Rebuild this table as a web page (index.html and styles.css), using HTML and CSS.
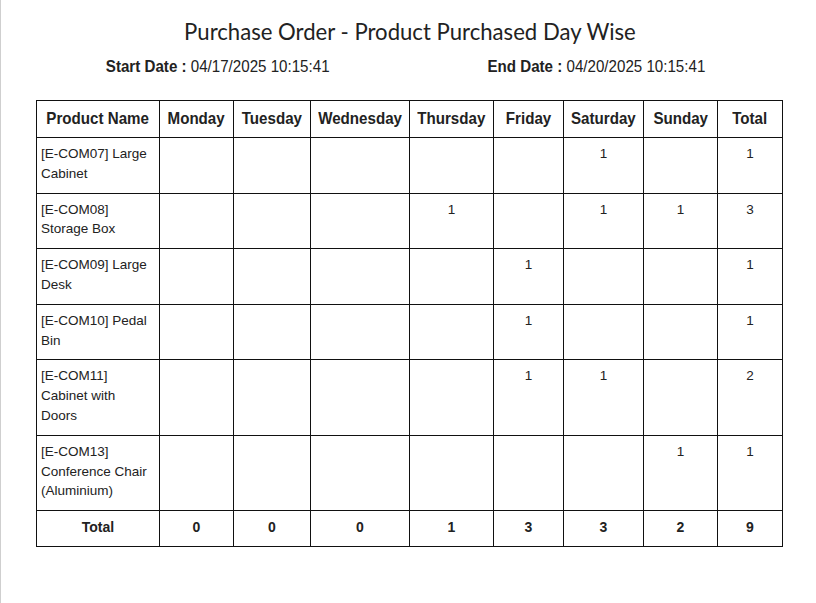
FILE: index.html
```html
<!DOCTYPE html>
<html>
<head>
<meta charset="utf-8">
<link rel="stylesheet" href="styles.css">
</head>
<body>
<div class="page">
  <h1 class="title"><span class="squeeze-title">Purchase Order - Product Purchased Day Wise</span></h1>
  <div class="dates">
    <div class="date date-start"><span class="squeeze"><b>Start Date :</b> 04/17/2025 10:15:41</span></div>
    <div class="date"><span class="squeeze"><b>End Date :</b> 04/20/2025 10:15:41</span></div>
  </div>
  <table class="report">
    <colgroup>
      <col class="c-name"><col class="c-mon"><col class="c-tue"><col class="c-wed"><col class="c-thu"><col class="c-fri"><col class="c-sat"><col class="c-sun"><col class="c-tot">
    </colgroup>
    <thead>
      <tr><th><span class="squeeze">Product Name</span></th><th><span class="squeeze">Monday</span></th><th><span class="squeeze">Tuesday</span></th><th><span class="squeeze">Wednesday</span></th><th><span class="squeeze">Thursday</span></th><th><span class="squeeze">Friday</span></th><th><span class="squeeze">Saturday</span></th><th><span class="squeeze">Sunday</span></th><th><span class="squeeze">Total</span></th></tr>
    </thead>
    <tbody>
      <tr><td class="name">[E-COM07] Large Cabinet</td><td></td><td></td><td></td><td></td><td></td><td>1</td><td></td><td>1</td></tr>
      <tr><td class="name">[E-COM08] Storage Box</td><td></td><td></td><td></td><td>1</td><td></td><td>1</td><td>1</td><td>3</td></tr>
      <tr><td class="name">[E-COM09] Large Desk</td><td></td><td></td><td></td><td></td><td>1</td><td></td><td></td><td>1</td></tr>
      <tr><td class="name">[E-COM10] Pedal Bin</td><td></td><td></td><td></td><td></td><td>1</td><td></td><td></td><td>1</td></tr>
      <tr><td class="name">[E-COM11] Cabinet with Doors</td><td></td><td></td><td></td><td></td><td>1</td><td>1</td><td></td><td>2</td></tr>
      <tr><td class="name">[E-COM13] Conference Chair (Aluminium)</td><td></td><td></td><td></td><td></td><td></td><td></td><td>1</td><td>1</td></tr>
    </tbody>
    <tfoot>
      <tr><th>Total</th><th>0</th><th>0</th><th>0</th><th>1</th><th>3</th><th>3</th><th>2</th><th>9</th></tr>
    </tfoot>
  </table>
</div>
</body>
</html>
```
FILE: styles.css
```css
html, body {
  margin: 0;
  padding: 0;
  background: #fff;
}
.page {
  box-sizing: border-box;
  min-height: 603px;
  border-left: 1px solid #cfcfcf;
  padding: 16px 0 0 35px;
  color: #222;
}
.title {
  margin: 0;
  width: 747px;
  text-align: center;
  font-family: Lato, "Liberation Sans", sans-serif;
  font-weight: 400;
  font-size: 24px;
  line-height: 30px;
  color: #222;
  white-space: nowrap;
}
.squeeze-title {
  display: inline-block;
  transform: scaleX(0.922);
}
.squeeze {
  display: inline-block;
  transform: scaleX(0.89);
  white-space: nowrap;
}
.dates {
  width: 747px;
  display: grid;
  grid-template-columns: 1fr 1fr;
  margin-top: 11px;
  font-family: "Liberation Sans", Arial, sans-serif;
  font-size: 17px;
  line-height: 20px;
  color: #222;
}
.date {
  text-align: center;
}
.date-start {
  padding-right: 10px;
}
.date b {
  font-weight: 700;
}
.report {
  margin-top: 23px;
  border-collapse: collapse;
  table-layout: fixed;
  width: 747px;
  font-family: "Liberation Sans", Arial, sans-serif;
  color: #222;
}
.c-name { width: 123px; }
.c-mon { width: 74px; }
.c-tue { width: 77px; }
.c-wed { width: 99px; }
.c-thu { width: 84px; }
.c-fri { width: 70px; }
.c-sat { width: 80px; }
.c-sun { width: 74px; }
.c-tot { width: 65px; }
.report th, .report td {
  border: 1px solid #111;
  text-align: center;
  vertical-align: top;
}
.report thead th {
  font-size: 17px;
  font-weight: 700;
  line-height: 20px;
  padding: 8px 0 8px;
  vertical-align: middle;
  white-space: nowrap;
}
.report td {
  font-size: 13.5px;
  line-height: 19.8px;
  padding: 6px 4px 9px;
}
.report td.name {
  text-align: left;
}
.report tfoot th {
  font-size: 14px;
  font-weight: 700;
  line-height: 20px;
  padding: 6px 4px 9px;
  vertical-align: top;
}
```
